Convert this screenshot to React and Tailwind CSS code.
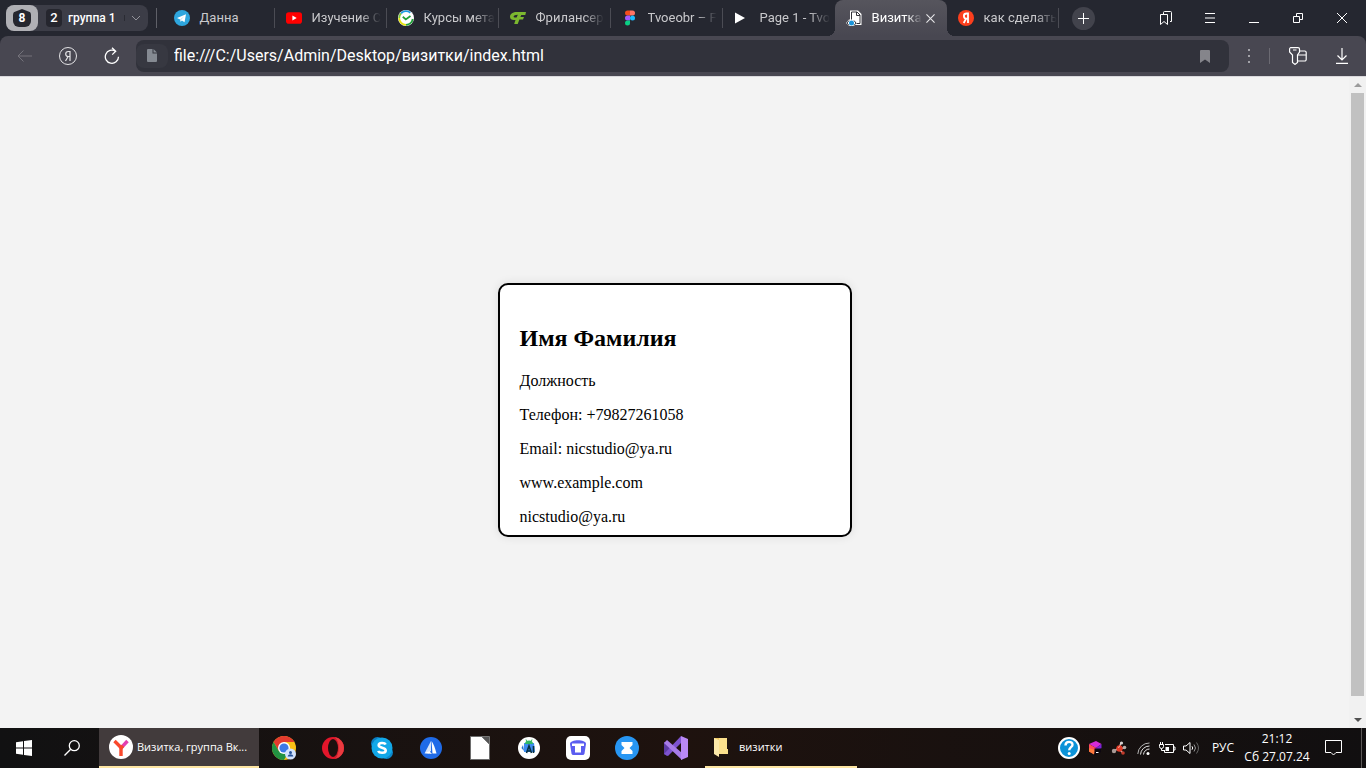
import { useState } from "react";

const contactLines = [
  "Должность",
  "Телефон: +79827261058",
  "Email: nicstudio@ya.ru",
  "www.example.com",
  "nicstudio@ya.ru",
];

/* ---------- Tab icons ---------- */

const TelegramIcon = () => (
  <svg viewBox="0 0 16 16" className="size-4 shrink-0">
    <circle cx="8" cy="8" r="8" fill="#2ea6de" />
    <path d="M3 8l9-3.7-1.5 8-2.6-1.9-1.3 1.4-.5-2.4z" fill="#fff" />
    <path d="M6.1 9.4L10.4 6 7 9.9l-.4 1.9z" fill="#b9dff0" />
  </svg>
);

const YoutubeIcon = () => (
  <svg viewBox="0 0 16 16" className="size-4 shrink-0">
    <rect y="2.3" width="16" height="11.4" rx="2.8" fill="#f00" />
    <path d="M6.4 5.5v5l4.3-2.5z" fill="#fff" />
  </svg>
);

const CoursesIcon = () => (
  <svg viewBox="0 0 16 16" className="size-4 shrink-0">
    <circle cx="8" cy="8" r="8" fill="#fff" />
    <path d="M14.7 9a6.8 6.8 0 0 1-6.7 5.8" fill="none" stroke="#21a038" strokeWidth="1.8" />
    <path d="M8 14.8A6.8 6.8 0 0 1 1.2 8" fill="none" stroke="#e6e20b" strokeWidth="1.8" />
    <path d="M1.2 8a6.8 6.8 0 0 1 1.9-4.7" fill="none" stroke="#7cc83a" strokeWidth="1.8" />
    <path d="M3.1 3.3a6.8 6.8 0 0 1 9.2-.6" fill="none" stroke="#1a9be0" strokeWidth="1.8" />
    <path d="M4.8 6.8l3 2.6 4.7-3.4" fill="none" stroke="#21a038" strokeWidth="1.8" />
  </svg>
);

const FreelanceIcon = () => (
  <svg viewBox="0 0 16 16" className="size-4 shrink-0">
    <path
      d="M16 2H7C3 2 0 3.8 0 6.8c0 2.2 1.6 3.3 3.8 3.3h1.7L4.2 14h3.5l1.7-4.4H13l1-2.6h-3.6l.9-2h4zM7.8 4.7L6.6 7.5H4.8c-.8 0-1.2-.3-1.2-.8 0-1.2 1.7-2 4.2-2z"
      fill="#7cb82f"
    />
  </svg>
);

const FigmaIcon = () => (
  <svg viewBox="0 0 16 16" className="size-4 shrink-0">
    <path d="M5.5.5H8v5H5.5a2.5 2.5 0 0 1 0-5z" fill="#f24e1e" />
    <path d="M8 .5h2.5a2.5 2.5 0 0 1 0 5H8z" fill="#ff7262" />
    <path d="M5.5 5.5H8v5H5.5a2.5 2.5 0 0 1 0-5z" fill="#a259ff" />
    <circle cx="10.5" cy="8" r="2.5" fill="#1abcfe" />
    <path d="M5.5 10.5H8V13a2.5 2.5 0 1 1-2.5-2.5z" fill="#0acf83" />
  </svg>
);

const PlayIcon = () => (
  <svg viewBox="0 0 16 16" className="size-4 shrink-0">
    <path d="M1 2.5v11L11 8z" fill="#fff" />
  </svg>
);

const PageIcon = () => (
  <svg viewBox="0 0 16 16" className="size-4 shrink-0">
    <path d="M4 .5h8l3.5 3.5v11H4z" fill="#fff" />
    <path d="M5.5 10V2H11l3 3v8.5h-4" fill="none" stroke="#34343b" />
    <path d="M10.5 2v3.5H14" fill="none" stroke="#34343b" />
    <path d="M0 13l3-3.5h5L11 13l-3 3H3z" fill="#fff" />
    <path d="M3 10.5L1 13l2 2.5M8 10.5l2 2.5-2 2.5" fill="none" stroke="#34343b" />
    <circle cx="5.5" cy="13" r="2.5" fill="#1b93d8" />
  </svg>
);

const YandexIcon = () => (
  <svg viewBox="0 0 16 16" className="size-4 shrink-0">
    <circle cx="8" cy="8" r="8" fill="#fc3f1d" />
    <path
      d="M10 13V3.5H8.6C7 3.5 5.9 4.2 5.9 5.9S7 8.7 8.7 8.7H10M8.2 8.5L5.7 13"
      fill="none"
      stroke="#fff"
      strokeWidth="1.8"
    />
  </svg>
);

const tabs = [
  { id: 1, title: "Данна", Icon: TelegramIcon },
  { id: 2, title: "Изучение С", Icon: YoutubeIcon },
  { id: 3, title: "Курсы мета", Icon: CoursesIcon },
  { id: 4, title: "Фрилансер", Icon: FreelanceIcon },
  { id: 5, title: "Tvoeobr – F", Icon: FigmaIcon },
  { id: 6, title: "Page 1 - Tvo", Icon: PlayIcon },
  { id: 7, title: "Визитка", Icon: PageIcon },
  { id: 8, title: "как сделать", Icon: YandexIcon },
];

/* ---------- Tab strip ---------- */

const Tab = ({ tab, active, beforeActive, onSelect }) => {
  const { Icon, title } = tab;
  const fade = "[mask-image:linear-gradient(to_right,black_70%,transparent)]";

  if (active) {
    return (
      <div className="relative flex h-9 w-28 min-w-0 items-center rounded-t-lg bg-linear-to-b from-[#56555d] to-[#484751] pl-[11px] before:absolute before:bottom-0 before:-left-2 before:size-2 before:bg-[radial-gradient(circle_at_0_0,transparent_8px,#484751_8px)] after:absolute after:-right-2 after:bottom-0 after:size-2 after:bg-[radial-gradient(circle_at_100%_0,transparent_8px,#484751_8px)]">
        <button className="flex min-w-0 flex-1 items-center gap-[10px]">
          <Icon />
          <span className={`text-left whitespace-nowrap text-white ${fade}`}>{title}</span>
        </button>
        <button aria-label="Закрыть вкладку" className="flex w-8 shrink-0 justify-center">
          <svg viewBox="0 0 10 10" className="size-[9px]">
            <path d="M.5.5l9 9M9.5.5l-9 9" stroke="#e8e8ea" strokeWidth="1.2" />
          </svg>
        </button>
      </div>
    );
  }

  return (
    <button
      onClick={() => onSelect(tab.id)}
      className={`flex h-5 w-28 min-w-0 items-center gap-[10px] border-r pl-[11px] text-[#c9c9cc] ${
        beforeActive ? "border-transparent" : "border-[#4b4c54]"
      }`}
    >
      <Icon />
      <span className={`text-left whitespace-nowrap ${title.length > 6 ? fade : ""}`}>
        {title}
      </span>
    </button>
  );
};

const TabStrip = () => {
  const [activeTab, setActiveTab] = useState(7);

  return (
    <header className="flex h-9 items-center bg-[#252730] pl-[6px] text-[13px]">
      <div className="flex h-[26px] shrink-0 items-center rounded-lg bg-[#3c3d47] text-[13px] text-white">
        <button className="flex h-[26px] w-8 items-center justify-center rounded-lg bg-[#b0b0b5]">
          <span className="flex size-[18px] items-center justify-center rounded-md bg-[#25262e] text-xs font-bold [clip-path:polygon(50%_0,100%_20%,100%_100%,0_100%,0_20%)]">
            8
          </span>
        </button>
        <button className="flex items-center gap-[6px] pr-2 pl-2">
          <span className="flex h-[18px] w-4 items-center justify-center rounded bg-[#25262e] font-medium">
            2
          </span>
          <span className="text-xs font-medium">группа 1</span>
        </button>
        <button aria-label="Развернуть группу" className="flex w-6 justify-center border-l border-[#2a2b33]">
          <svg viewBox="0 0 10 6" className="w-[10px]">
            <path d="M1 1l4 4 4-4" fill="none" stroke="#93939a" />
          </svg>
        </button>
      </div>
      <span className="ml-2 h-5 w-px shrink-0 bg-[#5f6068]" />

      <nav className="ml-[6px] flex min-w-0 items-center">
        {tabs.map((tab) => (
          <Tab
            key={tab.id}
            tab={tab}
            active={tab.id === activeTab}
            beforeActive={tab.id === activeTab - 1}
            onSelect={setActiveTab}
          />
        ))}
      </nav>
      <button
        aria-label="Новая вкладка"
        className="ml-[13px] flex size-[23px] shrink-0 items-center justify-center rounded-full bg-[#42434c]"
      >
        <svg viewBox="0 0 11 11" className="size-[11px]">
          <path d="M5.5 0v11M0 5.5h11" stroke="#fff" />
        </svg>
      </button>

      <div className="ml-auto flex shrink-0 pr-[2px]">
        <button aria-label="Закладки" className="flex w-11 justify-center">
          <svg viewBox="0 0 14 16" className="h-4 w-[14px]" fill="none" stroke="#fff">
            <path d="M1.5 4.5h7v10L5 11.5l-3.5 3z" />
            <path d="M4.5 4V2.5a1 1 0 0 1 1-1h6a1 1 0 0 1 1 1v9H11" />
          </svg>
        </button>
        <button aria-label="Меню" className="flex w-11 items-center justify-center">
          <svg viewBox="0 0 10 10" className="size-[10px]">
            <path d="M0 .5h10M0 5h10M0 9.5h10" stroke="#fff" />
          </svg>
        </button>
        <button aria-label="Свернуть" className="flex w-11 items-center justify-center">
          <svg viewBox="0 0 10 10" className="size-[10px]">
            <path d="M0 9.5h10" stroke="#fff" />
          </svg>
        </button>
        <button aria-label="Восстановить" className="flex w-11 items-center justify-center">
          <svg viewBox="0 0 10 10" className="size-[10px]" fill="none" stroke="#fff">
            <path d="M.5 3.5h6v6h-6zM3.5 3.5v-3h6v6h-3" />
          </svg>
        </button>
        <button aria-label="Закрыть" className="flex w-11 items-center justify-center">
          <svg viewBox="0 0 10 10" className="size-[10px]">
            <path d="M0 0l10 10M10 0L0 10" stroke="#fff" />
          </svg>
        </button>
      </div>
    </header>
  );
};

/* ---------- Address bar ---------- */

const Toolbar = () => {
  const [url, setUrl] = useState("file:///C:/Users/Admin/Desktop/визитки/index.html");

  return (
    <div className="bg-[#252730]">
      <div className="flex h-10 items-center rounded-t-lg bg-[#484751] pl-[2px]">
        <button aria-label="Назад" className="flex w-11 justify-center">
          <svg viewBox="0 0 15 12" className="h-3 w-[15px]" fill="none" stroke="#74737b">
            <path d="M15 6H1M6.5.5L1 6l5.5 5.5" />
          </svg>
        </button>
        <button aria-label="Яндекс" className="flex w-11 justify-center">
          <svg viewBox="0 0 18 18" className="size-[18px]" fill="none" stroke="#e4e4e6">
            <circle cx="9" cy="9" r="8.5" />
            <path d="M11 14V4.5H9.3C7.6 4.5 6.7 5.5 6.7 7s1 2.5 2.6 2.5H11M9.2 9.5L6.5 14" strokeWidth="1.2" />
          </svg>
        </button>
        <button aria-label="Обновить" className="flex w-11 justify-center">
          <svg viewBox="0 0 16 18" className="h-[18px] w-4" fill="none" stroke="#fff" strokeWidth="1.3">
            <path d="M14.5 9.8A6.6 6.6 0 1 1 11.5 4.2M8 .8l3.7 3.5L8.2 7.6" />
          </svg>
        </button>
        <div className="ml-[2px] flex h-8 min-w-0 flex-1 items-center rounded-lg bg-[#31323b]">
          <span className="flex h-6 w-8 justify-center rounded-lg bg-[#373841]">
            <svg viewBox="0 0 10 13" className="mt-[5px] h-[13px] w-[10px]" fill="#858a92">
              <path d="M1 0h4.5v4.5H10V12a1 1 0 0 1-1 1H1a1 1 0 0 1-1-1V1a1 1 0 0 1 1-1zM6.5 0L10 3.5H6.5z" />
            </svg>
          </span>
          <input
            type="text"
            aria-label="Адресная строка"
            value={url}
            onChange={(e) => setUrl(e.target.value)}
            className="ml-[6px] min-w-0 flex-1 bg-transparent text-base text-white outline-none"
          />
          <button aria-label="Добавить в закладки" className="flex w-12 justify-center">
            <svg viewBox="0 0 10 13" className="h-[13px] w-[10px]">
              <path d="M0 13V1a1 1 0 0 1 1-1h8a1 1 0 0 1 1 1v12L5 9.5z" fill="#85858b" />
            </svg>
          </button>
        </div>
        <button aria-label="Ещё" className="flex w-10 justify-center">
          <svg viewBox="0 0 2 14" className="h-[14px] w-[2px]" fill="#a3a3a9">
            <path d="M0 0h2v2H0zM0 6h2v2H0zM0 12h2v2H0z" />
          </svg>
        </button>
        <span className="h-4 w-px bg-[#6b6a72]" />
        <button aria-label="Пароли и карты" className="ml-[6px] flex w-11 justify-center">
          <svg viewBox="0 0 18 18" className="size-[18px]" fill="none" stroke="#fff" strokeWidth="1.2">
            <path d="M2.5.6H9a1.5 1.5 0 0 1 1.5 1.5v3L8.500 8v7.500L6 17.400 3.500 15.500V8L.6 5V2.100A1.500 1.500 0 0 1 2.500.600z" />
            <path d="M4 3h3.500M10.500 4h5.200a1.500 1.500 0 0 1 1.500 1.500v7a1.500 1.500 0 0 1-1.500 1.500H9M9 8h8" />
          </svg>
        </button>
        <button aria-label="Загрузки" className="mr-[2px] flex w-11 justify-center">
          <svg viewBox="0 0 12 16" className="h-4 w-3" fill="none" stroke="#fff" strokeWidth="1.2">
            <path d="M6 0v12M1.5 7.5L6 12l4.5-4.5M0 15.4h12" />
          </svg>
        </button>
      </div>
    </div>
  );
};

/* ---------- Page ---------- */

const BusinessCard = () => (
  <section className="h-[254px] w-[354px] rounded-[10px] border-2 border-black bg-white p-5 font-['Liberation_Serif',serif] text-black shadow-[0_0_10px_rgba(0,0,0,0.1)]">
    <h2 className="my-5 text-2xl leading-[27px] font-bold">Имя Фамилия</h2>
    {contactLines.map((line) => (
      <p key={line} className="mb-4 text-base leading-[18px]">
        {line}
      </p>
    ))}
  </section>
);

const Scrollbar = () => (
  <div className="flex w-[17px] flex-col items-center bg-[#f1f1f1]">
    <button aria-label="Вверх" className="flex h-4 w-full items-center justify-center">
      <svg viewBox="0 0 8 4" className="h-1 w-2">
        <path d="M0 4l4-4 4 4z" fill="#9b9b9b" />
      </svg>
    </button>
    <div className="w-[13px] flex-1 bg-[#c1c1c1]" />
    <button aria-label="Вниз" className="mt-[15px] flex h-[17px] w-full items-center justify-center">
      <svg viewBox="0 0 8 4" className="h-1 w-2">
        <path d="M0 0l4 4 4-4z" fill="#505050" />
      </svg>
    </button>
  </div>
);

/* ---------- Taskbar ---------- */

const ChromeIcon = () => (
  <svg viewBox="0 0 24 24" className="size-6">
    <circle cx="12" cy="12" r="12" fill="#fbc116" />
    <path d="M1.6 6A12 12 0 0 1 22.4 6H12L6.8 15z" fill="#e33b2e" />
    <path d="M1.6 6A12 12 0 0 0 12 24l5.2-9H6.8z" fill="#229342" />
    <circle cx="12" cy="12" r="6" fill="#fff" />
    <circle cx="12" cy="12" r="4.6" fill="#3c79e6" />
    <circle cx="18.5" cy="18" r="5.5" fill="#d3e3fd" />
    <circle cx="18.5" cy="16.5" r="1.5" fill="#24529c" />
    <path d="M15.7 20.5c.2-3 5.4-3 5.6 0z" fill="#24529c" />
  </svg>
);

const OperaIcon = () => (
  <svg viewBox="0 0 24 24" className="size-6">
    <circle cx="12" cy="12" r="11" fill="#e3162b" />
    <path d="M12 1a11 11 0 0 1 0 22c7-3 7-19 0-22z" fill="#c9202c" />
    <path d="M14 1.2a11 11 0 0 1 0 21.6c5-4 5-17.6 0-21.6z" fill="#ea3b40" />
    <ellipse cx="12" cy="12" rx="5" ry="9" fill="#1b110f" />
  </svg>
);

const SkypeIcon = () => (
  <svg viewBox="0 0 24 24" className="size-6">
    <circle cx="7.5" cy="7.5" r="6.5" fill="#0b7ec2" />
    <circle cx="16.5" cy="16.5" r="6.5" fill="#0b88cc" />
    <circle cx="12" cy="12" r="10.5" fill="#12a8e8" />
    <path
      d="M15.7 8.5c-1-2-7-2.2-7 .8 0 3.2 7 1.8 7 5.2 0 3-6.3 3-7.6.5"
      fill="none"
      stroke="#fff"
      strokeWidth="2.6"
    />
  </svg>
);

const SailIcon = () => (
  <svg viewBox="0 0 24 24" className="size-6">
    <circle cx="12" cy="12" r="11" fill="#1f6be8" />
    <path d="M12 5v9.5l-2 3H5.5z" fill="#d5e5fd" />
    <path d="M12.5 5q2.5 3 5 12.5h-4z" fill="#fff" />
    <path d="M6 17l4.5-1.8L13 18z" fill="#fff" />
  </svg>
);

const DocumentIcon = () => (
  <svg viewBox="0 0 24 24" className="size-6">
    <path d="M2.5.5h12l7 7v16h-19z" fill="#fff" stroke="#6d6d6d" />
    <path d="M13.5.5h8v8z" fill="#555" stroke="#777" />
  </svg>
);

const AndroidStudioIcon = () => (
  <svg viewBox="0 0 24 24" className="size-6">
    <circle cx="12" cy="12" r="11" fill="#fff" />
    <path d="M7 7h10l1 9H7z" fill="#3d8cf0" />
    <path d="M8 8a4 3.6 0 0 1 8 0z" fill="#32b866" />
    <path d="M9 3.5L10 6M15 3.5L14 6" stroke="#32b866" />
    <path d="M9.5 17L12 10l2.5 7M10.5 15h3M16.5 10v7" fill="none" stroke="#073042" strokeWidth="1.6" />
    <path d="M6 9L4.5 12 7 15z" fill="#236ec9" />
  </svg>
);

const BucketIcon = () => (
  <svg viewBox="0 0 24 24" className="size-6">
    <rect width="24" height="24" rx="5" fill="#fff" />
    <path d="M4 8c0-5 16-5 16 0l-1.5 9.5q-.3 1.5-2 1.5h-9q-1.7 0-2-1.5z" fill="#5b5cf0" />
    <path d="M6 7.5h12V10h-3v6.5H9V10H6z" fill="#fff" />
  </svg>
);

const HourglassIcon = () => (
  <svg viewBox="0 0 24 24" className="size-6">
    <circle cx="12" cy="12" r="12" fill="#2796f3" />
    <path d="M6.5 6h11v3l-3 3 3 3v3h-11v-3l3-3-3-3z" fill="#fff" />
  </svg>
);

const VisualStudioIcon = () => (
  <svg viewBox="0 0 24 24" className="size-6">
    <path d="M0 6v12l3 2 3-3V8z" fill="#5c3ba5" />
    <path d="M17 0v7L4 20l-4-2L17 0z" fill="#7d53cf" />
    <path d="M3 4l15 13v7L0 7z" fill="#a77be8" />
    <path d="M17 0l7 3v18l-7 3z" fill="#b988f5" />
  </svg>
);

const pinnedApps = [
  { name: "Chrome", Icon: ChromeIcon },
  { name: "Opera", Icon: OperaIcon },
  { name: "Skype", Icon: SkypeIcon },
  { name: "Навигатор", Icon: SailIcon },
  { name: "LibreOffice", Icon: DocumentIcon },
  { name: "Android Studio", Icon: AndroidStudioIcon },
  { name: "Хранилище", Icon: BucketIcon },
  { name: "Таймер", Icon: HourglassIcon },
  { name: "Visual Studio", Icon: VisualStudioIcon },
];

const Tray = () => (
  <div className="ml-auto flex shrink-0 items-center">
    <button aria-label="Справка" className="flex w-7 justify-center">
      <svg viewBox="0 0 24 24" className="size-6">
        <circle cx="12" cy="12" r="10" fill="#0c93d8" stroke="#fff" strokeWidth="2" />
        <path d="M8.5 9.5c0-5 7-4.500 7-.8 0 2.500-3.300 2.500-3.300 5.600" fill="none" stroke="#fff" strokeWidth="2.4" />
        <circle cx="12.2" cy="17.5" r="1.5" fill="#fff" />
      </svg>
    </button>
    <button aria-label="Toolbox" className="flex w-6 justify-center">
      <svg viewBox="0 0 14 16" className="h-4 w-[14px]">
        <path d="M1 4l7-3 5.5 3L8 8z" fill="#d52ad8" />
        <path d="M1 4l7 4-2 6-5-2.5z" fill="#ff4a5a" />
        <path d="M1 8l6 2-1 4.5-5-3z" fill="#ff7a3c" />
        <path d="M8 8l5.5-4v4L8 13z" fill="#7a22d8" />
        <path d="M6.5 8.5H13V12l-6.500 3.500z" fill="#0c0710" />
        <path d="M8 12.5h2.5" stroke="#fff" />
      </svg>
    </button>
    <button aria-label="Утилита" className="flex w-6 justify-center">
      <svg viewBox="0 0 16 14" className="h-[14px] w-4">
        <path d="M3 10l5-3 2-5M8 8l5-1M8 8l4 4" fill="none" stroke="#cfc8c4" strokeWidth="1.5" />
        <circle cx="8.5" cy="7.5" r="3.2" fill="#e23a26" />
        <circle cx="3" cy="10" r="2.2" fill="#a89a96" />
        <circle cx="10.5" cy="2" r="1.6" fill="#d9d4d2" />
        <circle cx="13.5" cy="6.5" r="1.8" fill="#b5aca8" />
        <circle cx="12" cy="12" r="1.8" fill="#c23a2a" />
        <path d="M7 6.5l2-1" stroke="#f6b0a0" />
      </svg>
    </button>
    <button aria-label="Сеть" className="flex w-6 justify-center">
      <svg viewBox="0 0 13 13" className="size-[13px]" fill="none" stroke="#e6e6e6">
        <path d="M.8 12A11.5 11.5 0 0 1 12.5 1" stroke="#b5b5b5" />
        <path d="M3.5 12.5A9 9 0 0 1 12.5 4M6.5 12.5a6 6 0 0 1 6-5.5" />
        <circle cx="11" cy="11.5" r="1.5" fill="#fff" stroke="none" />
      </svg>
    </button>
    <button aria-label="Батарея" className="flex w-6 justify-center">
      <svg viewBox="0 0 17 12" className="h-3 w-[17px]" fill="none" stroke="#fff">
        <path d="M6 2.5h8.5v8h-9V8M15 5h1v3h-1" />
        <path d="M6.5 5H10v4H6.5z" fill="#fff" stroke="none" />
        <path d="M.5 2.5h4v2a2 2 0 0 1-4 0zM1.5 0v2.5M3.5 0v2.5M2.5 6.5v2H5" />
      </svg>
    </button>
    <button aria-label="Звук" className="flex w-6 justify-center">
      <svg viewBox="0 0 17 14" className="h-[14px] w-[17px]" fill="none" stroke="#fff">
        <path d="M.5 5H3l4-3.5v11L3 9H.5z" />
        <path d="M9 5.3q1.5 1.7 0 3.4" />
        <path d="M11 3.5q3 3.5 0 7" stroke="#999" />
        <path d="M13.5 1.5q4 5.5 0 11" stroke="#666" />
      </svg>
    </button>
    <button className="w-10 text-center">РУС</button>
    <button className="w-[68px] text-center leading-[18px] whitespace-nowrap">
      <span className="block">21:12</span>
      <span className="block">Сб 27.07.24</span>
    </button>
    <button aria-label="Уведомления" className="flex w-11 justify-center">
      <svg viewBox="0 0 17 16" className="h-4 w-[17px]" fill="none" stroke="#fff">
        <path d="M.5.5h16v12H11L8.5 15 6 12.5H.5z" />
      </svg>
    </button>
    <span className="ml-[6px] h-10 w-[5px] border-l border-[#5b5857]" />
  </div>
);

const Taskbar = () => (
  <footer className="flex h-10 shrink-0 items-center bg-linear-to-r from-[#111112] via-[#1e120e] to-[#110f10] font-['Open_Sans',sans-serif] text-xs text-white">
    <button aria-label="Пуск" className="flex w-12 justify-center">
      <svg viewBox="0 0 16 16" className="size-4" fill="#fff">
        <path d="M0 2.2l7-1v6.3H0zM8 1.1L16 0v7.5H8zM0 8.5h7v6.3l-7-1zM8 8.5h8V16l-8-1.1z" />
      </svg>
    </button>
    <button aria-label="Поиск" className="flex w-[51px] justify-center pr-[3px]">
      <svg viewBox="0 0 16 16" className="size-4" fill="none" stroke="#fff" strokeWidth="1.3">
        <circle cx="10.3" cy="5.7" r="5" />
        <path d="M6.7 9.3L.5 15.5" />
      </svg>
    </button>
    <button className="flex h-10 w-40 items-center gap-1 border-b-2 border-[#fde5a2] bg-[#423b3c] pl-[10px] text-[11px]">
      <svg viewBox="0 0 24 24" className="size-6 shrink-0">
        <circle cx="12" cy="12" r="12" fill="#fff" />
        <path d="M12 12.5V21M12.5 13L5.5 6" fill="none" stroke="#f9482c" strokeWidth="3.4" />
        <path d="M11.5 13.5L18.5 6" stroke="#e33fb0" strokeWidth="3.4" />
        <path d="M11 14l3-3.2" stroke="#f9482c" strokeWidth="3.4" />
      </svg>
      <span className="whitespace-nowrap">Визитка, группа Вк...</span>
    </button>
    {pinnedApps.map(({ name, Icon }) => (
      <button key={name} aria-label={name} className="flex w-[49px] justify-center">
        <Icon />
      </button>
    ))}
    <button className="ml-[5px] flex h-10 w-[152px] items-center gap-[11px] border-b-2 border-[#fde5a2] pl-[9px] text-[11px]">
      <svg viewBox="0 0 14 20" className="h-5 w-[14px]">
        <path d="M0 1h13v16H0z" fill="#f0c75e" />
        <path d="M5 1h8v11h1v5H5z" fill="#fbe08c" />
        <path d="M0 1l5 2v17l-5-3z" fill="#fce9a9" />
      </svg>
      <span>визитки</span>
    </button>
    <Tray />
  </footer>
);

const App = () => {
  return (
    <div className="flex h-screen flex-col overflow-hidden font-[Roboto,sans-serif]">
      <TabStrip />
      <Toolbar />
      <div className="flex min-h-0 flex-1 border-t border-[#d9d8dc] bg-[#f3f3f3]">
        <main className="flex flex-1 items-center justify-center pt-[15px]">
          <BusinessCard />
        </main>
        <Scrollbar />
      </div>
      <Taskbar />
    </div>
  );
};

export default App;
